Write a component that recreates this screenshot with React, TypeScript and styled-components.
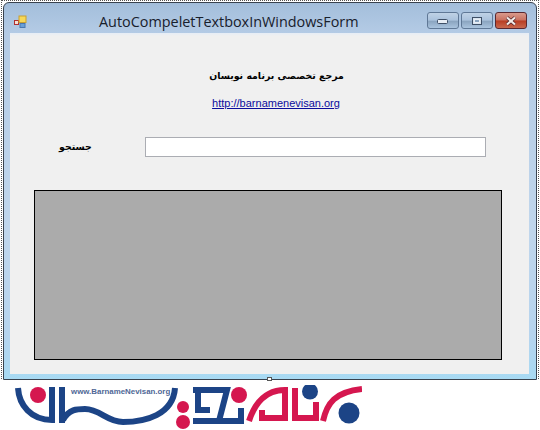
import React from "react";
import styled, { createGlobalStyle } from "styled-components";

const Global = createGlobalStyle`
  html, body { margin: 0; padding: 0; background: #fff; }
  body { width: 540px; height: 430px; overflow: hidden; font-family: "Liberation Sans", Arial, sans-serif; }
`;

const Page = styled.div`
  width: 540px;
  height: 430px;
  display: flex;
  flex-direction: column;
`;
const Selection = styled.div`
  width: 538px;
  height: 379px;
  margin-left: 1px;
  border: 1px dotted #555;
  border-bottom: none;
  box-sizing: border-box;
  position: relative;
`;
const Handle = styled.span`
  position: absolute;
  left: 265px;
  bottom: -2px;
  width: 5px;
  height: 4px;
  background: #fff;
  border: 1px solid #555;
  box-sizing: border-box;
`;
const Frame = styled.div`
  height: 100%;
  margin: 1px 1px 0 1px;
  box-sizing: border-box;
  border: 1px solid #39424e;
  border-radius: 6px 6px 0 0;
  padding: 0 7px 5px 6px;
  display: flex;
  flex-direction: column;
  background: linear-gradient(180deg, #a3bedb 0%, #b4cbe5 8%, #c0d6ec 60%, #b6d4ee 88%, #a8daf3 100%);
`;
const TitleBar = styled.div`
  height: 30px;
  flex: none;
  display: flex;
  align-items: center;
  position: relative;
`;
const AppIcon = styled.svg`
  width: 14px;
  height: 14px;
  margin: 7px 0 0 4px;
  flex: none;
`;
const Title = styled.div`
  position: absolute;
  left: 89px;
  top: 9px;
  font: 14.4px/20px "Open Sans", "Noto Sans", sans-serif;
  color: #18202c;
  white-space: nowrap;
`;
const Controls = styled.div`
  margin-left: auto;
  margin-right: 2px;
  margin-top: 5px;
  display: flex;
  gap: 2px;
`;
const Control = styled.button<{ $close?: boolean }>`
  width: 32px;
  height: 17px;
  padding: 0;
  display: flex;
  align-items: center;
  justify-content: center;
  border: 1px solid ${(p) => (p.$close ? "#5a2830" : "#5f7896")};
  border-radius: 3px;
  background: ${(p) =>
    p.$close
      ? "linear-gradient(180deg,#d99a8c 0%,#c9705f 48%,#b83c22 52%,#c8684e 100%)"
      : "linear-gradient(180deg,#bfd2e6 0%,#aac2dc 48%,#8aa4bf 54%,#aac4de 100%)"};
`;
const Client = styled.div`
  flex: 1;
  background: linear-gradient(180deg, #e6edf6 0, #f0f0f0 3px);
  display: flex;
  flex-direction: column;
  align-items: center;
  padding: 0 27px 14px 24px;
  min-height: 0;
`;
const Heading = styled.div`
  margin-top: 35px;
  margin-left: 17px;
  font: bold 9.4px/16px "DejaVu Sans", sans-serif;
  color: #000;
  direction: rtl;
  white-space: nowrap;
`;
const Link = styled.a`
  margin-top: 12px;
  margin-left: 16px;
  font: 11px/14px "Liberation Sans", Arial, sans-serif;
  color: #0c0c9c;
  text-decoration: underline;
`;
const SearchRow = styled.div`
  margin-top: 27px;
  width: 100%;
  height: 20px;
  display: flex;
  align-items: center;
`;
const SearchLabel = styled.div`
  width: 111px;
  padding-left: 25px;
  box-sizing: border-box;
  font: bold 9.4px/16px "DejaVu Sans", sans-serif;
  color: #000;
  direction: ltr;
`;
const SearchInput = styled.input`
  width: 341px;
  height: 20px;
  box-sizing: border-box;
  border: 1px solid #abadb3;
  background: #fff;
  outline: none;
  padding: 0;
`;
const GridPanel = styled.div`
  margin-top: 33px;
  width: 100%;
  flex: 1;
  background: #ababab;
  border: 1px solid #000;
  box-sizing: border-box;
`;
const LogoRow = styled.div`
  flex: 1;
  padding: 6px 0 0 15px;
`;
const LogoSvg = styled.svg`
  display: block;
  width: 347px;
  height: 44px;
`;

const navy = "#1c4486";
const red = "#d5174f";

const App: React.FC = () => (
  <Page>
    <Global />
    <Selection>
      <Frame>
        <TitleBar>
          <AppIcon viewBox="0 0 14 14">
            <rect x="0.5" y="5.5" width="4" height="4" fill="#f4e0d8" stroke="#b03030" />
            <rect x="5" y="1" width="7" height="6.5" fill="#f7d858" stroke="#c9a030" />
            <rect x="6" y="8.5" width="5" height="4" fill="#6aa0d8" stroke="#4a78b0" />
          </AppIcon>
          <Title>AutoCompeletTextboxInWindowsForm</Title>
          <Controls>
            <Control aria-label="minimize">
              <svg width="12" height="6" viewBox="0 0 12 6">
                <rect x="0.5" y="1.5" width="10" height="4" rx="1" fill="#e8eef5" stroke="#3e4f66" />
              </svg>
            </Control>
            <Control aria-label="maximize">
              <svg width="12" height="10" viewBox="0 0 12 10">
                <rect x="1.5" y="1.5" width="9" height="7" fill="#d8e3ef" stroke="#3e4f66" />
                <rect x="3.5" y="3.5" width="5" height="3" fill="#8aa4bf" stroke="#e8eef5" strokeWidth="1" />
              </svg>
            </Control>
            <Control $close aria-label="close">
              <svg width="14" height="10" viewBox="0 0 14 10">
                <path d="M3 1.5 L11 8.5 M11 1.5 L3 8.5" stroke="#4a2028" strokeWidth="3.4" />
                <path d="M3 1.5 L11 8.5 M11 1.5 L3 8.5" stroke="#f4ece8" strokeWidth="2.2" />
              </svg>
            </Control>
          </Controls>
        </TitleBar>
        <Client>
          <Heading>مرجع تخصصی برنامه نویسان</Heading>
          <Link href="#">http://barnamenevisan.org</Link>
          <SearchRow>
            <SearchLabel>جستجو</SearchLabel>
            <SearchInput />
          </SearchRow>
          <GridPanel />
        </Client>
      </Frame>
      <Handle />
    </Selection>
    <LogoRow>
      <LogoSvg viewBox="0 0 347 44">
        {/* navy swooshes on the left */}
        <path d="M3 3 C4 20 16 35 37 35 V2" fill="none" stroke={navy} strokeWidth="6" />
        <circle cx="23" cy="10" r="8" fill={red} />
        <path d="M47 2 V38" stroke={navy} strokeWidth="6" />
        <path d="M48 35 C54 24 62 24 70 24 C85 24 92 37 108 37 C130 37 158 30 160 3" fill="none" stroke={navy} strokeWidth="6" />
        <text x="56" y="9" fontFamily="Liberation Sans" fontSize="7.9" fontWeight="bold" fill="#4f6796">www.BarnameNevisan.org</text>
        <circle cx="168" cy="22" r="6" fill={red} />
        <circle cx="168" cy="37" r="7" fill={red} />
        {/* navy middle letter */}
        <path d="M178 5 H212 L204 36 M178 36 H226 V23 M183 5 V25 H195" fill="none" stroke={navy} strokeWidth="6" />
        <circle cx="224" cy="10" r="8" fill={red} />
        {/* red letters */}
        <path d="M234 36 C240 18 250 5 270 5 V33 H247 V25" fill="none" stroke={red} strokeWidth="6" />
        <path d="M280 3 V33 H301 V17" fill="none" stroke={red} strokeWidth="6" />
        <path d="M308 36 C312 18 320 7 347 4" fill="none" stroke={red} strokeWidth="6" />
        <circle cx="295" cy="6.5" r="8" fill={navy} />
        <circle cx="334" cy="28" r="10.5" fill={navy} />
      </LogoSvg>
    </LogoRow>
  </Page>
);

export default App;
